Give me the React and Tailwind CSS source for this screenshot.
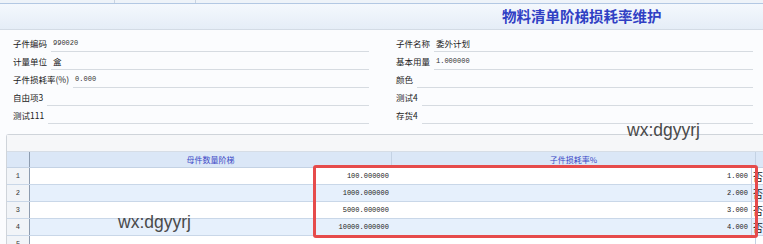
import React from 'react';

const leftFields = [
  { label: '子件编码', value: '990020', mono: true },
  { label: '计量单位', value: '盒' },
  { label: '子件损耗率(%)', value: '0.000', mono: true },
  { label: '自由项3', value: '' },
  { label: '测试111', value: '' },
];

const rightFields = [
  { label: '子件名称', value: '委外计划' },
  { label: '基本用量', value: '1.000000', mono: true },
  { label: '颜色', value: '' },
  { label: '测试4', value: '' },
  { label: '存货4', value: '' },
];

const rows = [
  { qty: '100.000000', rate: '1.000' },
  { qty: '1000.000000', rate: '2.000' },
  { qty: '5000.000000', rate: '3.000' },
  { qty: '10000.000000', rate: '4.000' },
  { qty: '', rate: '' },
];

const cjk = "font-['SimSun','Noto_Sans_CJK_SC',sans-serif]";

const Field = ({ label, value, mono }) => (
  <div className="flex items-center h-[18px]">
    <span className={`text-[8.5px] leading-[12px] text-[#222] mr-[4px] whitespace-nowrap ${cjk}`}>{label}</span>
    <div className="flex-1 self-stretch border-b border-[#d6dbe1] flex items-center pl-[2px]">
      <span
        className={
          mono
            ? "text-[7px] leading-[12px] text-[#333] font-['Liberation_Mono',monospace]"
            : `text-[8.5px] leading-[12px] text-[#222] ${cjk}`
        }
      >
        {value}
      </span>
    </div>
  </div>
);

const App = () => {
  return (
    <div className="relative w-[763px] h-[244px] overflow-hidden bg-[#fbfcfe]">
      {/* top tab strip */}
      <div className="h-[4px] bg-[#eef3f9] border-b border-[#b3c8e3] flex">
        <div className="w-[115px] border-r border-[#c9d4e2]" />
        <div className="w-[81px] border-r border-[#c9d4e2]" />
      </div>

      {/* title bar */}
      <div className="h-[26px] bg-gradient-to-b from-[#f4f8fd] to-[#e5edf7] border-b border-[#d3dbe5] flex items-center pl-[502px]">
        <span className={`text-[14.5px] font-bold leading-none text-[#3040c4] ${cjk}`}>
          物料清单阶梯损耗率维护
        </span>
      </div>

      {/* form */}
      <div className="grid grid-cols-[369px_384px] pt-[4px]">
        <div className="pl-[13px] flex flex-col">
          {leftFields.map((f) => (
            <Field key={f.label} {...f} />
          ))}
        </div>
        <div className="pl-[27px] flex flex-col">
          {rightFields.map((f) => (
            <Field key={f.label} {...f} />
          ))}
        </div>
      </div>

      {/* grid */}
      <div className="mt-[10px] ml-[6px] border-t border-l border-[#cfd4da] rounded-tl-[3px]">
        <div className="h-[17px] bg-[#f6f7f9] border-b border-[#d6dde6]" />
        <div className="flex h-[16px] bg-[#dbe7f7] border-b border-[#c4d2e4]">
          <div className="w-[23px] border-r border-[#8d9cb0]" />
          <div className={`w-[362px] flex items-center justify-center text-[8px] text-[#3a48c6] border-r border-[#c4d2e4] ${cjk}`}>
            母件数量阶梯
          </div>
          <div className={`w-[364px] flex items-center justify-center text-[8px] text-[#3a48c6] border-r border-[#c4d2e4] ${cjk}`}>
            子件损耗率%
          </div>
          <div className="flex-1" />
        </div>
        {rows.map((r, i) => (
          <div
            key={i}
            className={`flex h-[17px] border-b border-[#c9d7e8] ${i % 2 === 1 ? 'bg-[#e6f0fc]' : 'bg-white'}`}
          >
            <div className="w-[23px] border-r border-[#8d9cb0] bg-[#f1f4f8] flex items-center justify-center text-[7px] text-[#333] font-['Liberation_Mono',monospace]">
              {i + 1}
            </div>
            <div className="w-[362px] flex items-center justify-end pr-[1px] text-[7px] text-[#222] font-['Liberation_Mono',monospace]">
              {r.qty}
            </div>
            <div className="w-[364px] flex items-center justify-end pr-[3px] text-[7px] text-[#222] font-['Liberation_Mono',monospace] border-r border-[#c4d2e4]">
              {r.rate}
            </div>
            <div className={`flex-1 flex items-center pl-[1px] text-[10px] text-[#222] ${cjk}`}>
              {r.rate ? '否' : ''}
            </div>
          </div>
        ))}
      </div>

      {/* red annotation box */}
      <div className="absolute left-[313px] top-[165px] w-[445px] h-[73px] border-[3px] border-[#e64b4b] rounded-[3px]" />

      {/* watermarks */}
      <div className="absolute left-[627px] top-[122px] text-[17.5px] leading-none text-[#4a4a4a] font-['Liberation_Sans',sans-serif]">
        wx:dgyyrj
      </div>
      <div className="absolute left-[118px] top-[214px] text-[17.5px] leading-none text-[#4a4a4a] font-['Liberation_Sans',sans-serif]">
        wx:dgyyrj
      </div>
    </div>
  );
};

export default App;
